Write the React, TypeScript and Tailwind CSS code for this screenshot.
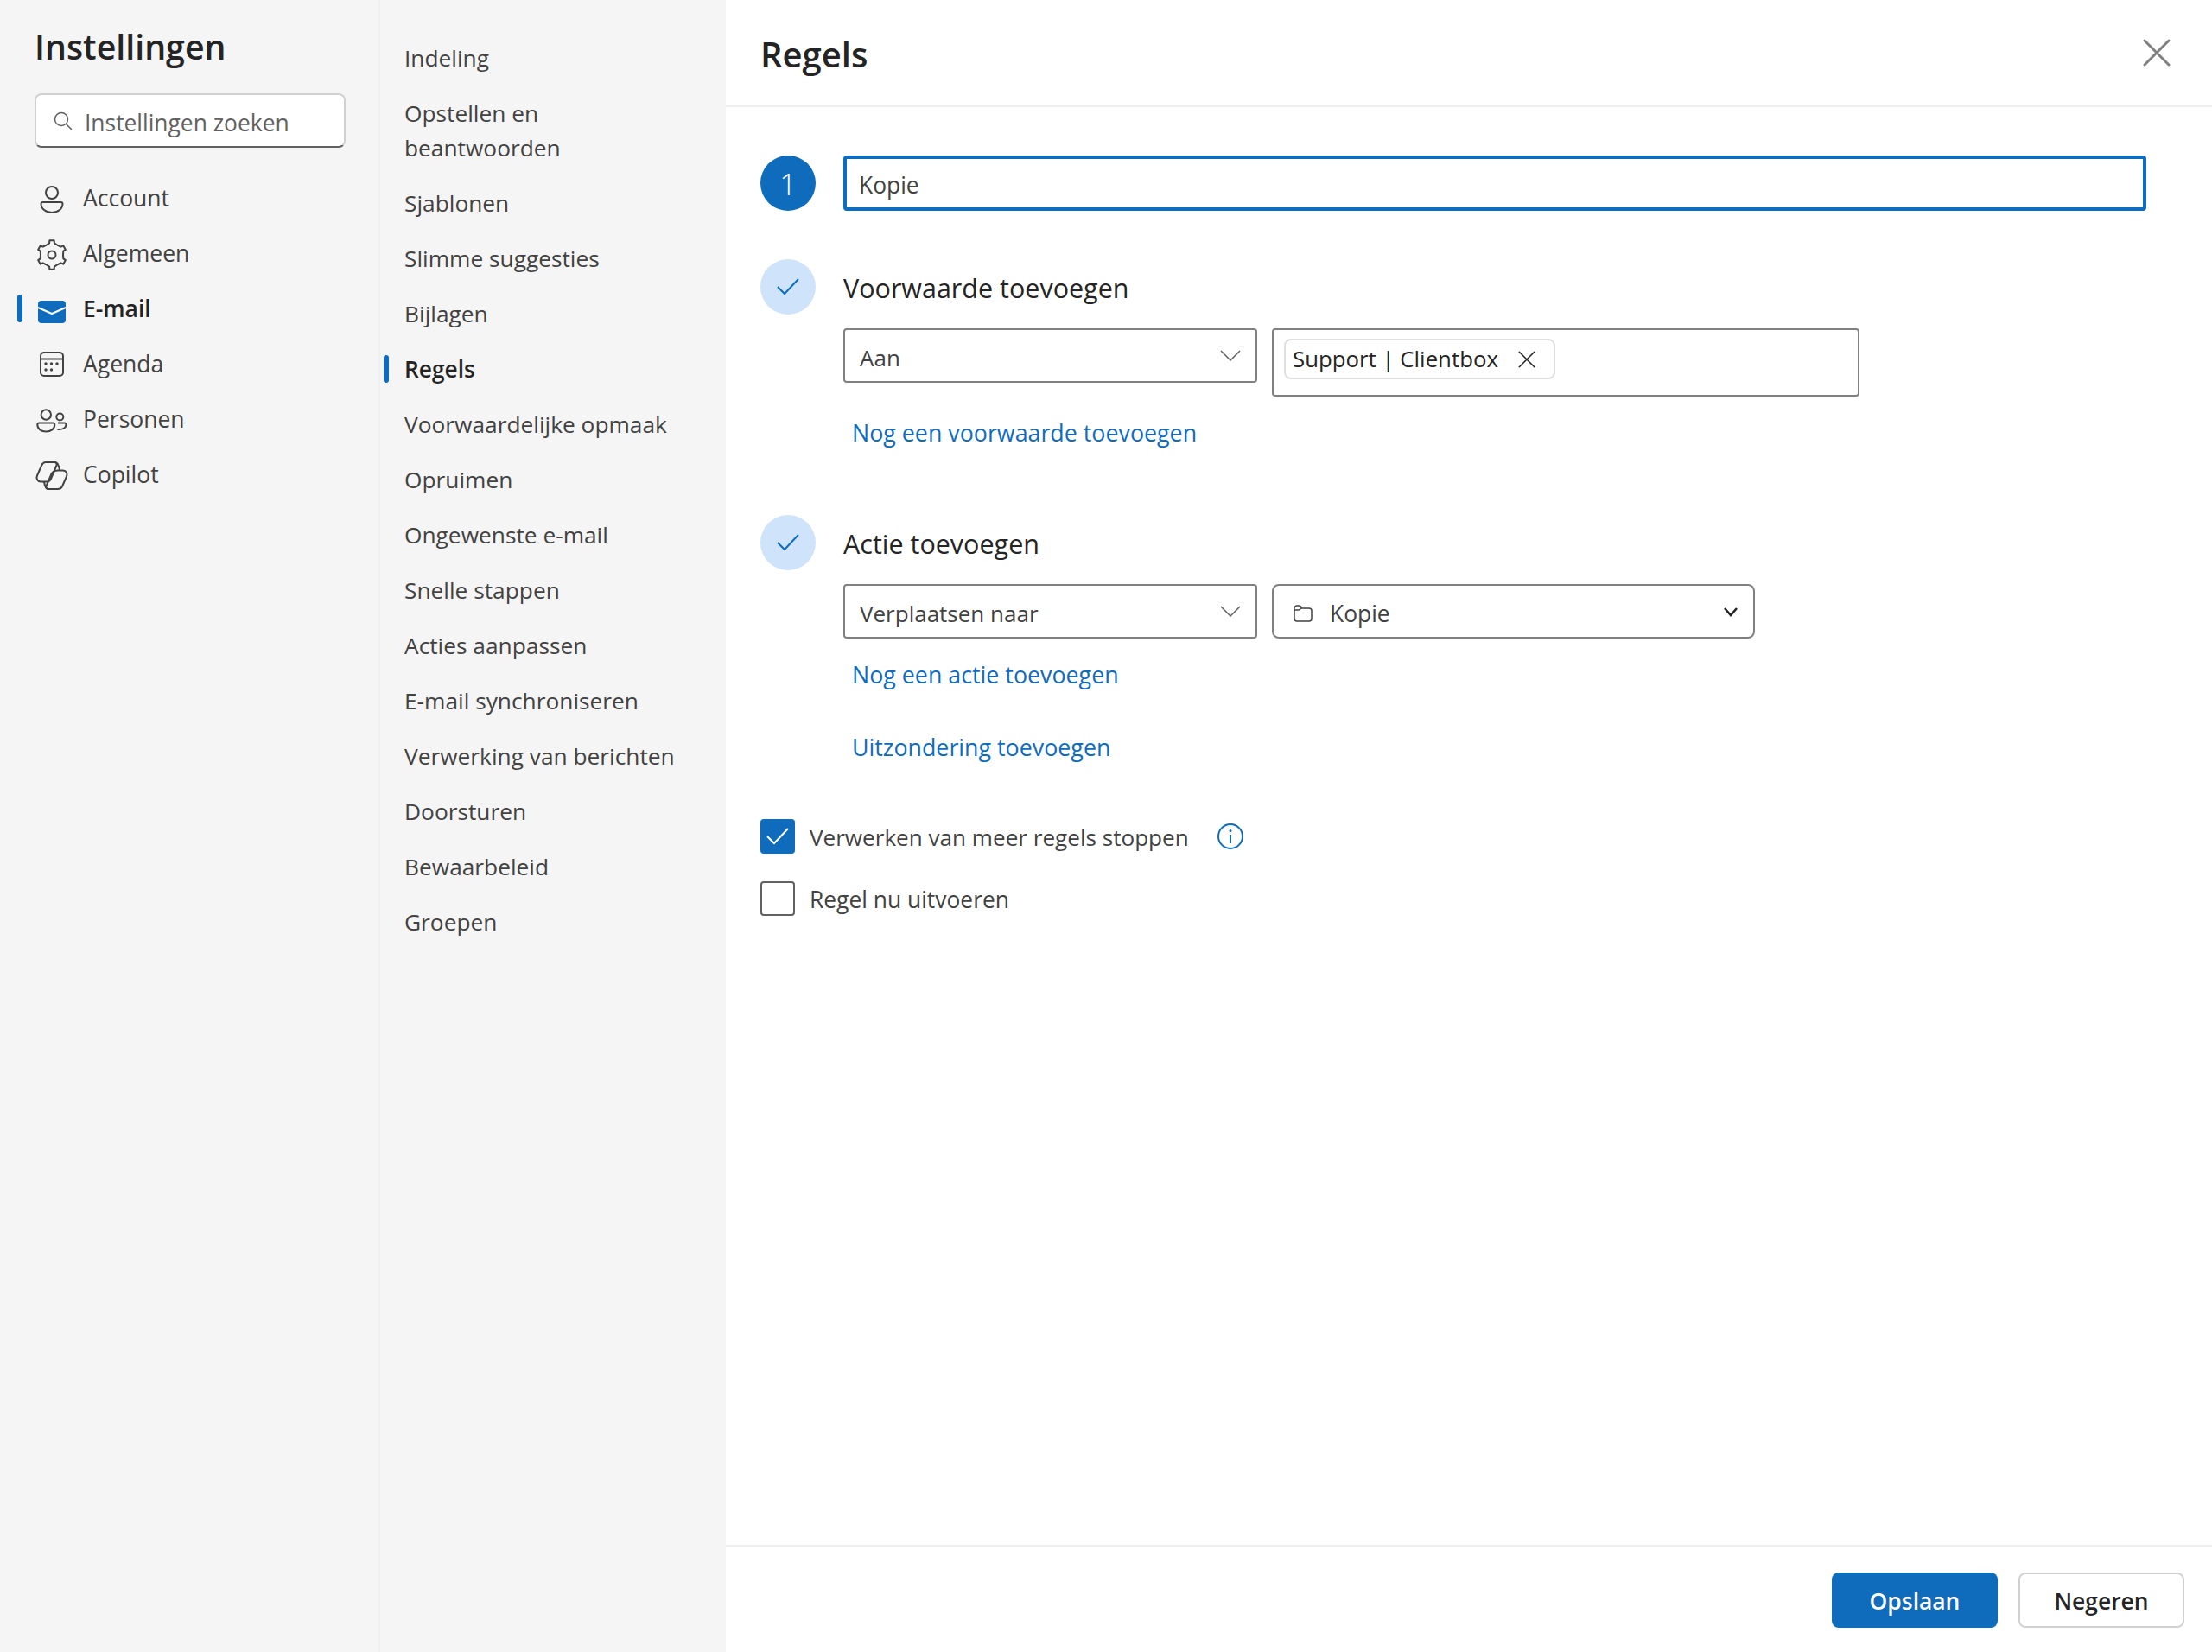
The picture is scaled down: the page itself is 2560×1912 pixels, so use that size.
import React from "react";

const mainNav = ["Account", "Algemeen", "E-mail", "Agenda", "Personen", "Copilot"];

const mailNav = [
  "Indeling",
  "Opstellen en beantwoorden",
  "Sjablonen",
  "Slimme suggesties",
  "Bijlagen",
  "Regels",
  "Voorwaardelijke opmaak",
  "Opruimen",
  "Ongewenste e-mail",
  "Snelle stappen",
  "Acties aanpassen",
  "E-mail synchroniseren",
  "Verwerking van berichten",
  "Doorsturen",
  "Bewaarbeleid",
  "Groepen",
];

// six lobed outline for the settings gear
const gearPath = () => {
  const pts: string[] = [];
  for (let k = 0; k < 6; k++) {
    const a = -90 + 60 * k;
    [
      [a - 30, 13],
      [a - 12, 14],
      [a - 9, 17],
      [a + 9, 17],
      [a + 12, 14],
    ].forEach(([deg, r]) => {
      const rad = (deg * Math.PI) / 180;
      pts.push(`${(20 + r * Math.cos(rad)).toFixed(2)} ${(22 + r * Math.sin(rad)).toFixed(2)}`);
    });
  }
  return `M${pts.join("L")}Z`;
};

const NavIcon = ({ name }: { name: string }) => (
  <svg width="40" height="40" viewBox="0 0 40 40" fill="none" stroke="#424242" strokeWidth="2" strokeLinejoin="round">
    {name === "Account" && (
      <>
        <circle cx="20" cy="14" r="7" />
        <path d="M9.5 25H30.500A2 2 0 0 1 32.500 27C32.500 32.500 27 37 20 37C13 37 7.500 32.500 7.500 27A2 2 0 0 1 9.500 25Z" />
      </>
    )}
    {name === "Algemeen" && (
      <>
        <path d={gearPath()} />
        <circle cx="20" cy="22" r="4.500" />
      </>
    )}
    {name === "E-mail" && (
      <>
        <rect x="4" y="11" width="32" height="26" rx="4" fill="#0f6cbd" stroke="none" />
        <path d="M4 19L20 26L36 19" stroke="#ffffff" />
      </>
    )}
    {name === "Agenda" && (
      <>
        <rect x="7" y="7" width="26" height="27" rx="4" />
        <path d="M7 14.500H33" />
        <g fill="#424242" stroke="none">
          <circle cx="13" cy="20" r="1.700" />
          <circle cx="19.500" cy="20" r="1.700" />
          <circle cx="26" cy="20" r="1.700" />
          <circle cx="13" cy="27" r="1.700" />
          <circle cx="19.500" cy="27" r="1.700" />
        </g>
      </>
    )}
    {name === "Personen" && (
      <>
        <circle cx="13.300" cy="15" r="5.700" />
        <circle cx="29.300" cy="17.500" r="4" />
        <path d="M5.300 24.500H21.300A2 2 0 0 1 23.300 26.500C23.300 31.500 18.800 34.500 13.300 34.500C7.800 34.500 3.300 31.500 3.300 26.500A2 2 0 0 1 5.300 24.500Z" />
        <path d="M27 24.500H34.500A2 2 0 0 1 36.500 26.500C36.500 30 32.500 32.500 26.500 32" />
      </>
    )}
    {name === "Copilot" && (
      <>
        <path d="M13 6H23C25 6 26 7.500 25.500 9.500L19 25C18 27.500 16.500 28.500 14 28.500H7C3.500 28.500 1.500 25 3 21.500L8 10C9 7.500 10.500 6 13 6Z" />
        <path d="M27 15.500H33C36.500 15.500 38.500 19 37 22.500L32 34C31 36 29.500 37 27 37H16C14 37 13 35.500 13.500 33.500L20 18.500C21.500 16.500 24 15.500 27 15.500Z" />
        <path d="M24 6C26.500 6 28 9 29 15.500M11 28.500C11.500 32 13 37 16 37" />
      </>
    )}
  </svg>
);

const Check = ({ color }: { color: string }) => (
  <svg width="26" height="20" viewBox="0 0 26 20" fill="none" stroke={color} strokeWidth="2">
    <path d="M1 10L9 18L25 1" />
  </svg>
);

const Chevron = () => (
  <svg width="24" height="13" viewBox="0 0 24 13" fill="none" stroke="#616161" strokeWidth="1.500">
    <path d="M1 1L12 12L23 1" />
  </svg>
);

const Cross = ({ size, color, width }: { size: number; color: string; width: number }) => (
  <svg width={size} height={size} viewBox="0 0 32 32" fill="none" stroke={color} strokeWidth={width} strokeLinecap="round">
    <path d="M2 2L30 30M30 2L2 30" />
  </svg>
);

const StepCircle = ({ children, active }: { children: React.ReactNode; active?: boolean }) => (
  <div
    className={`flex h-[64px] w-[64px] shrink-0 items-center justify-center rounded-full ${
      active ? "bg-[#0f6cbd] text-white" : "bg-[#cfe4fa]"
    }`}
  >
    {children}
  </div>
);

const SelectBox = ({ label }: { label: string }) => (
  <div className="flex h-[63px] w-[479px] items-center justify-between rounded-[4px] border-2 border-[#808080] pl-[17px] pr-[17px] text-[26px] text-[#424242]">
    <span className="pt-[6px]">{label}</span>
    <Chevron />
  </div>
);

const LinkText = ({ children }: { children: React.ReactNode }) => (
  <div className="ml-[10px] h-[40px] text-[26.8px] leading-[40px] text-[#0f6cbd]">{children}</div>
);

export default function App() {
  return (
    <div className="flex h-[1912px] w-[2560px] overflow-hidden bg-white font-['Open_Sans',sans-serif] text-[#424242]">
      {/* Settings categories */}
      <aside className="w-[440px] shrink-0 border-r-2 border-[#f0f0f0] bg-[#f5f5f5] pt-[28px]">
        <h1 className="pl-[40px] text-[39.300px] font-semibold leading-[52px] text-[#242424]">Instellingen</h1>
        <div className="ml-[40px] mt-[28px] flex h-[63px] w-[360px] items-center gap-[14px] rounded-[8px] border-2 border-[#d1d1d1] border-b-[#616161] bg-white pl-[20px]">
          <svg width="22" height="22" viewBox="0 0 22 22" fill="none" stroke="#616161" strokeWidth="1.500">
            <circle cx="9" cy="9" r="7.500" />
            <path d="M14.500 14.500L21 21" />
          </svg>
          <input
            placeholder="Instellingen zoeken"
            className="w-[290px] bg-transparent pt-[6px] text-[26.4px] outline-none placeholder:text-[#616161]"
          />
        </div>
        <nav className="mt-[26px]">
          {mainNav.map((item) => {
            const active = item === "E-mail";
            return (
              <div key={item} className="flex h-[64px] items-center pl-[20px]">
                <div className={`mr-[14px] h-[32px] w-[6px] rounded-full ${active ? "bg-[#0f6cbd]" : ""}`} />
                <div className="mr-[16px] flex w-[40px] justify-center">
                  <NavIcon name={item} />
                </div>
                <span className={`pt-[2px] text-[26.5px] ${active ? "font-semibold text-[#242424]" : ""}`}>{item}</span>
              </div>
            );
          })}
        </nav>
      </aside>

      {/* Mail settings */}
      <aside className="w-[400px] shrink-0 bg-[#f5f5f5] pt-[35px]">
        {mailNav.map((item) => {
          const active = item === "Regels";
          return (
            <div key={item} className="flex items-center py-[12px] pl-[4px]">
              <div className={`mr-[18px] h-[32px] w-[6px] shrink-0 rounded-full ${active ? "bg-[#0f6cbd]" : ""}`} />
              <span className={`w-[330px] text-[26.3px] leading-[40px] ${active ? "font-semibold text-[#242424]" : ""}`}>
                {item}
              </span>
            </div>
          );
        })}
      </aside>

      {/* Rule editor */}
      <main className="flex min-w-0 flex-1 flex-col">
        <header className="flex h-[124px] shrink-0 items-center justify-between border-b-2 border-[#f0f0f0] pl-[40px] pr-[48px]">
          <h2 className="pt-[3px] text-[40px] font-semibold text-[#242424]">Regels</h2>
          <Cross size={32} color="#808080" width={3} />
        </header>

        <div className="flex-1 pl-[40px] pt-[56px]">
          <div className="flex gap-[32px]">
            <StepCircle active>
              <span className="pt-[2px] text-[34px] font-light">1</span>
            </StepCircle>
            <input
              readOnly
              value="Kopie"
              className="h-[64px] w-[1508px] rounded-[4px] border-4 border-[#0f6cbd] pl-[14px] pt-[3px] text-[26.4px] text-[#424242] outline-none"
            />
          </div>

          <div className="mt-[56px] flex gap-[32px]">
            <StepCircle>
              <Check color="#0f6cbd" />
            </StepCircle>
            <div>
              <h3 className="flex h-[64px] items-center pt-[3px] text-[30.5px] text-[#242424]">Voorwaarde toevoegen</h3>
              <div className="mt-[16px] flex items-start gap-[17px]">
                <SelectBox label="Aan" />
                <div className="flex h-[79px] w-[680px] items-start rounded-[4px] border-2 border-[#808080] pl-[12px] pt-[10px]">
                  <div className="flex h-[47px] w-[314px] items-center rounded-[8px] border-2 border-[#e0e0e0] pl-[8px] text-[25.8px] text-[#242424]">
                    <span className="w-[261px]">Support | Clientbox</span>
                    <Cross size={20} color="#242424" width={2.500} />
                  </div>
                </div>
              </div>
              <div className="mt-[22px]">
                <LinkText>Nog een voorwaarde toevoegen</LinkText>
              </div>
            </div>
          </div>

          <div className="mt-[75px] flex gap-[32px]">
            <StepCircle>
              <Check color="#0f6cbd" />
            </StepCircle>
            <div>
              <h3 className="flex h-[64px] items-center pt-[3px] text-[30.5px] text-[#242424]">Actie toevoegen</h3>
              <div className="mt-[16px] flex items-start gap-[17px]">
                <SelectBox label="Verplaatsen naar" />
                <div className="flex h-[63px] w-[559px] items-center justify-between rounded-[8px] border-2 border-[#808080] pl-[23px] pr-[18px] text-[26.4px]">
                  <div className="flex items-center gap-[20px]">
                    <svg
                      width="22"
                      height="20"
                      viewBox="0 0 22 20"
                      fill="none"
                      stroke="#424242"
                      strokeWidth="1.500"
                      className="mt-[6px]"
                    >
                      <path d="M1 4A3 3 0 0 1 4 1H6A3 3 0 0 1 9 4H18A3 3 0 0 1 21 7V16A3 3 0 0 1 18 19H4A3 3 0 0 1 1 16ZM1 6H6L9 4" />
                    </svg>
                    <span className="pt-[6px]">Kopie</span>
                  </div>
                  <svg width="16" height="12" viewBox="0 0 16 12" fill="none" stroke="#242424" strokeWidth="2.500">
                    <path d="M1 2L8 10L15 2" />
                  </svg>
                </div>
              </div>
              <div className="mt-[22px]">
                <LinkText>Nog een actie toevoegen</LinkText>
              </div>
              <div className="mt-[44px]">
                <LinkText>Uitzondering toevoegen</LinkText>
              </div>
            </div>
          </div>

          <div className="mt-[63px] flex h-[40px] items-center">
            <div className="flex h-[40px] w-[40px] items-center justify-center rounded-[4px] bg-[#0f6cbd]">
              <Check color="#ffffff" />
            </div>
            <span className="ml-[17px] w-[472px] pt-[3px] text-[26.1px]">Verwerken van meer regels stoppen</span>
            <svg width="30" height="30" viewBox="0 0 30 30" fill="none" stroke="#0f6cbd" strokeWidth="2">
              <circle cx="15" cy="15" r="14" />
              <path d="M15 13V23" />
              <circle cx="15" cy="8.500" r="1.500" fill="#0f6cbd" stroke="none" />
            </svg>
          </div>
          <div className="mt-[32px] flex h-[40px] items-center">
            <div className="h-[40px] w-[40px] rounded-[4px] border-2 border-[#616161]" />
            <span className="ml-[17px] pt-[4px] text-[26.4px]">Regel nu uitvoeren</span>
          </div>
        </div>

        <footer className="flex h-[124px] shrink-0 justify-end gap-[24px] border-t-2 border-[#f0f0f0] pr-[32px] pt-[30px]">
          <button className="h-[64px] w-[192px] rounded-[8px] bg-[#0f6cbd] pt-[3px] text-[26.4px] font-semibold text-white">
            Opslaan
          </button>
          <button className="h-[64px] w-[192px] rounded-[8px] border-2 border-[#d1d1d1] pt-[3px] text-[26.4px] font-semibold text-[#242424]">
            Negeren
          </button>
        </footer>
      </main>
    </div>
  );
}
